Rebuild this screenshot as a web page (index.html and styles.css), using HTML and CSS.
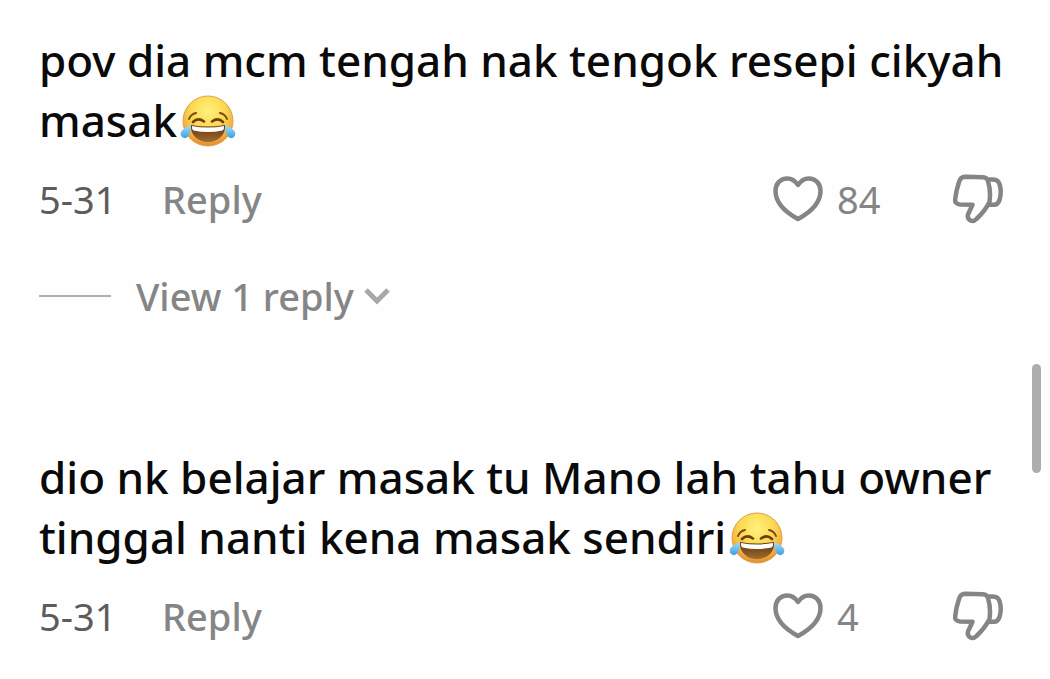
FILE: index.html
```html
<!DOCTYPE html>
<html lang="ms">
<head>
  <meta charset="UTF-8">
  <meta name="viewport" content="width=device-width, initial-scale=1.0">
  <title>Comments</title>
  <link rel="stylesheet" href="styles.css">
</head>
<body>
  <!-- Shared icons -->
  <svg class="sprite" aria-hidden="true">
    <defs>
      <radialGradient id="face" cx="50%" cy="30%" r="70%">
        <stop offset="0" stop-color="#fff27c"/>
        <stop offset="0.5" stop-color="#fbd850"/>
        <stop offset="0.85" stop-color="#f0a83c"/>
        <stop offset="1" stop-color="#dc8b30"/>
      </radialGradient>
      <linearGradient id="mouth" x1="0" y1="0" x2="0" y2="1">
        <stop offset="0" stop-color="#5f3413"/>
        <stop offset="1" stop-color="#a06a2c"/>
      </linearGradient>
      <linearGradient id="tear" x1="0" y1="0" x2="0" y2="1">
        <stop offset="0" stop-color="#a5e0fa"/>
        <stop offset="1" stop-color="#3d9fe0"/>
      </linearGradient>
    </defs>
    <symbol id="joy" viewBox="0 0 56 52">
      <circle cx="28" cy="26" r="25" fill="url(#face)" stroke="#dfa04a"/>
      <path d="M9 24Q11 19 16 18M47 24Q45 19 40 18" fill="none" stroke="#7a4a12" stroke-width="2" stroke-linecap="round"/>
      <path d="M13 27Q18 22 24 26.500M32 26.500Q38 22 43 27" fill="none" stroke="#6b3f10" stroke-width="2.600" stroke-linecap="round"/>
      <path d="M11 30Q28 33 45 30C46 40 38 47 28 47C18 47 10 40 11 30Z" fill="url(#mouth)"/>
      <path d="M12 31Q28 34 44 31Q44.500 34 42.500 35.500Q28 38.500 13.500 35.500Q11.500 34 12 31Z" fill="#fff"/>
      <path d="M11 30Q11 38 8 41.500Q5 44.500 2 42Q-1 38 3 34.500Q6 32 11 30Z" fill="url(#tear)"/>
      <path d="M45 30Q45 38 48 41.500Q51 44.500 54 42Q57 38 53 34.500Q50 32 45 30Z" fill="url(#tear)"/>
    </symbol>
    <symbol id="heart" viewBox="0 0 50 46">
      <path d="M25 9C21.500 4 18 2.500 14.500 2.500C7 2.500 2.500 8 2.500 15C2.500 27 13 36.500 25 43C37 36.500 47.500 27 47.500 15C47.500 8 43 2.500 35.500 2.500C32 2.500 28.500 4 25 9Z"/>
    </symbol>
    <symbol id="dislike" viewBox="0 0 50 50">
      <path d="M12 2.800L30 3.200Q34 3.400 35 7Q38 17 36.500 28Q32 37 23.500 45Q20.500 48 17.500 46.500Q14 44.500 15 40.500L19.500 30.700L7 30.500Q1.500 30 2.200 25Q3 17 6 8Q7.500 3 12 2.800Z"/>
      <path d="M36 5.500H40Q45 5.500 46.500 10Q49 18 46.500 26Q45 30.700 41 30.700H35.500"/>
    </symbol>
  </svg>

  <main class="comments">
    <article class="comment">
      <p class="comment-text">pov dia mcm tengah nak tengok resepi cikyah masak<svg class="emoji" role="img" aria-label="😂"><use href="#joy"/></svg></p>
      <div class="comment-meta">
        <time class="date">5-31</time>
        <button type="button" class="reply-btn">Reply</button>
        <button type="button" class="like-btn" aria-label="Like, 84">
          <svg class="icon heart"><use href="#heart"/></svg>
          <span>84</span>
        </button>
        <button type="button" class="dislike-btn" aria-label="Dislike">
          <svg class="icon dislike"><use href="#dislike"/></svg>
        </button>
      </div>
      <button type="button" class="view-replies">
        <span class="line"></span>
        <span>View 1 reply</span>
        <svg class="chevron" viewBox="0 0 26 18"><path d="M2 3L13 14L24 3"/></svg>
      </button>
    </article>

    <article class="comment">
      <p class="comment-text">dio nk belajar masak tu Mano lah tahu owner tinggal nanti kena masak sendiri<svg class="emoji" role="img" aria-label="😂"><use href="#joy"/></svg></p>
      <div class="comment-meta">
        <time class="date">5-31</time>
        <button type="button" class="reply-btn">Reply</button>
        <button type="button" class="like-btn" aria-label="Like, 4">
          <svg class="icon heart"><use href="#heart"/></svg>
          <span>4</span>
        </button>
        <button type="button" class="dislike-btn" aria-label="Dislike">
          <svg class="icon dislike"><use href="#dislike"/></svg>
        </button>
      </div>
    </article>
  </main>

  <div class="scroll-thumb"></div>
</body>
</html>
```

FILE: styles.css
```css
/* Reset */
* {
  margin: 0;
  padding: 0;
  box-sizing: border-box;
}

/* Global Styles */
body {
  font-family: 'Noto Sans', sans-serif;
  background-color: #fefefe;
  color: #0a0a0a;
}

button {
  font: inherit;
  color: inherit;
  background: none;
  border: none;
  cursor: pointer;
}

.sprite {
  position: absolute;
  width: 0;
  height: 0;
}

/* Comments */
.comments {
  display: flex;
  flex-direction: column;
  gap: 126px;
  padding: 30px 36px 30px 39px;
}

.comment-text {
  font-size: 44px;
  font-weight: 500;
  line-height: 60px;
}

.emoji {
  width: 56px;
  height: 52px;
  margin-left: 3px;
  vertical-align: -10px;
}

/* Date, reply and like row */
.comment-meta {
  display: flex;
  align-items: center;
  height: 50px;
  margin-top: 24px;
  padding-right: 11px;
  font-size: 38px;
  line-height: 50px;
  color: #858585;
}

.date {
  width: 123px;
  color: #5c5c5c;
}

.reply-btn {
  font-weight: 500;
}

.like-btn {
  display: flex;
  align-items: center;
  gap: 14px;
  width: 180px;
  margin-left: auto;
}

.dislike-btn {
  display: flex;
}

.icon {
  fill: none;
  stroke: #858585;
  stroke-width: 4.5;
  stroke-linejoin: round;
  stroke-linecap: round;
}

.heart {
  width: 50px;
  height: 46px;
}

.dislike {
  width: 50px;
  height: 50px;
}

/* View replies */
.view-replies {
  display: flex;
  align-items: center;
  margin-top: 47px;
  font-size: 38px;
  font-weight: 500;
  line-height: 50px;
  color: #858585;
}

.line {
  width: 72px;
  height: 2px;
  margin-right: 25px;
  background-color: #b0b0b0;
}

.chevron {
  width: 26px;
  height: 18px;
  margin-left: 10px;
  fill: none;
  stroke: #a8a8a8;
  stroke-width: 5;
}

/* Scroll indicator */
.scroll-thumb {
  position: fixed;
  top: 364px;
  right: 9px;
  width: 9px;
  height: 109px;
  border-radius: 5px;
  background-color: #adadad;
}
```
